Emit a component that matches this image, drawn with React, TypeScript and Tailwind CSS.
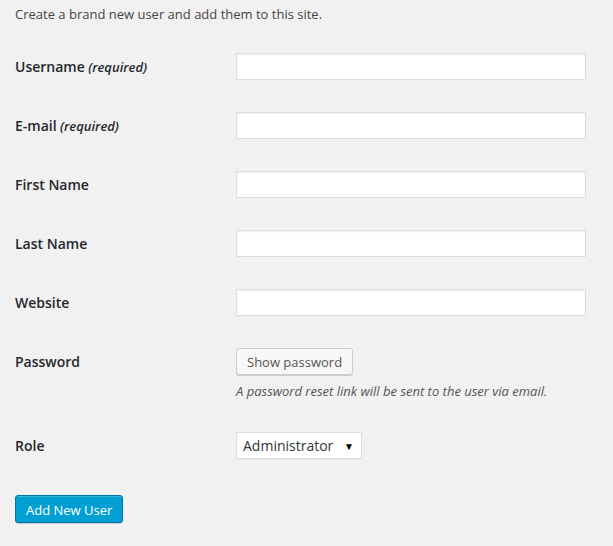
import React from 'react';

const fields = [
  { label: 'Username', required: true },
  { label: 'E-mail', required: true },
  { label: 'First Name', required: false },
  { label: 'Last Name', required: false },
  { label: 'Website', required: false },
];

const inputClass =
  'w-[350px] h-[27px] bg-white border border-[#ddd] shadow-[inset_0_1px_2px_rgba(0,0,0,0.07)] px-[5px] text-[14px] outline-none';

const labelClass = 'w-[221px] text-[14px] font-semibold text-[#23282d]';

export default function App() {
  return (
    <div className="min-h-[546px] bg-[#f1f1f1] pl-[15px] text-[#444] font-['Open_Sans',sans-serif]">
      <p className="pt-[4px] text-[13px] leading-[20px]">Create a brand new user and add them to this site.</p>

      <div className="mt-[13px]">
        {fields.map((f) => (
          <div key={f.label} className="flex h-[59px] items-center">
            <div className={labelClass}>
              {f.label}
              {f.required && <span className="text-[13px] italic"> (required)</span>}
            </div>
            <input type="text" className={inputClass} />
          </div>
        ))}

        <div className="flex pt-[16px] pb-[15px]">
          <div className={labelClass + ' h-[27px] flex items-center'}>Password</div>
          <div className="flex flex-col items-start">
            <button className="h-[27px] pt-[2px] px-[10px] rounded-[3px] border border-[#ccc] bg-[#f7f7f7] shadow-[0_1px_0_#ccc] text-[13px] text-[#555]">
              Show password
            </button>
            <p className="mt-[6px] text-[13px] italic leading-[20px] text-[#555]">
              A password reset link will be sent to the user via email.
            </p>
          </div>
        </div>

        <div className="flex h-[59px] items-center">
          <div className={labelClass}>Role</div>
          <div className="w-[126px] h-[27px] flex items-center justify-between bg-white border border-[#ddd] shadow-[0_1px_1px_rgba(0,0,0,0.04)] pl-[6px] pr-[7px] text-[14px] text-[#32373c]">
            <span>Administrator</span>
            <span className="text-[10px] leading-none text-black">▼</span>
          </div>
        </div>
      </div>

      <button className="mt-[20px] h-[28px] pt-[3px] px-[10px] rounded-[3px] border border-[#0073aa] bg-[#00a0d2] shadow-[inset_0_1px_0_rgba(120,200,230,0.5),0_1px_0_rgba(0,0,0,0.15)] text-[13px] text-white">
        Add New User
      </button>
    </div>
  );
}
